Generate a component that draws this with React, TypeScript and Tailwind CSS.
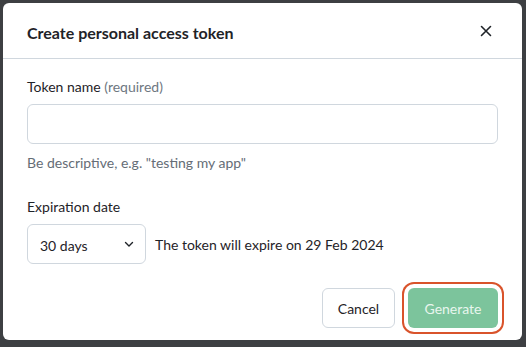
import React from "react";

export default function App() {
  return (
    <div
      className="w-[526px] h-[347px] bg-[#3d3f42] pt-[3px] pl-[3px]"
      style={{ fontFamily: 'Lato, "Noto Sans", sans-serif' }}
    >
      <div className="w-[519px] h-[337px] bg-white rounded-md flex flex-col">
        <div className="h-[56px] flex items-center justify-between pl-6 pr-[29px] pt-[4px] border-b border-[#d0d7de]">
          <h2 className="text-[16px] font-bold text-[#1f2328]">Create personal access token</h2>
          <svg width="14" height="14" viewBox="0 0 14 14" className="text-[#1f2328] -mt-[4px]">
            <path d="M2.5 2.5 L11.5 11.5 M11.5 2.5 L2.5 11.5" stroke="currentColor" strokeWidth="1.6" strokeLinecap="round" />
          </svg>
        </div>
        <div className="px-6 pt-[18px] flex flex-col">
          <label className="text-[14px] leading-5 text-[#1f2328]">
            Token name <span className="text-[#6e7781]">(required)</span>
          </label>
          <div className="mt-[7px] h-[40px] w-full rounded-md border border-[#d0d7de]" />
          <p className="mt-[9px] text-[14px] leading-5 text-[#656d76]">Be descriptive, e.g. "testing my app"</p>
          <label className="mt-[24px] text-[14px] leading-5 text-[#1f2328]">Expiration date</label>
          <div className="mt-[7px] flex items-center gap-[9px]">
            <div className="h-[40px] w-[119px] rounded-md border border-[#d0d7de] flex items-center justify-between pl-[12px] pr-[10px]">
              <span className="text-[14px] text-[#1f2328] mt-[2px]">30 days</span>
              <svg width="12" height="12" viewBox="0 0 12 12" className="text-[#1f2328]">
                <path d="M2.5 4.5 L6 8 L9.5 4.5" stroke="currentColor" strokeWidth="1.4" fill="none" strokeLinecap="round" strokeLinejoin="round" />
              </svg>
            </div>
            <span className="text-[14px] text-[#1f2328]">The token will expire on 29 Feb 2024</span>
          </div>
          <div className="mt-[24px] flex justify-end items-center gap-[13px] pr-0">
            <button className="h-[40px] w-[73px] rounded-md border border-[#d0d7de] bg-white text-[14px] text-[#1f2328]">
              Cancel
            </button>
            <button className="h-[40px] w-[90px] rounded-md bg-[#7cc49c] text-[14px] text-[#e8f6ee] ring-2 ring-[#d9532b] ring-offset-4 ring-offset-white">
              Generate
            </button>
          </div>
        </div>
      </div>
    </div>
  );
}
